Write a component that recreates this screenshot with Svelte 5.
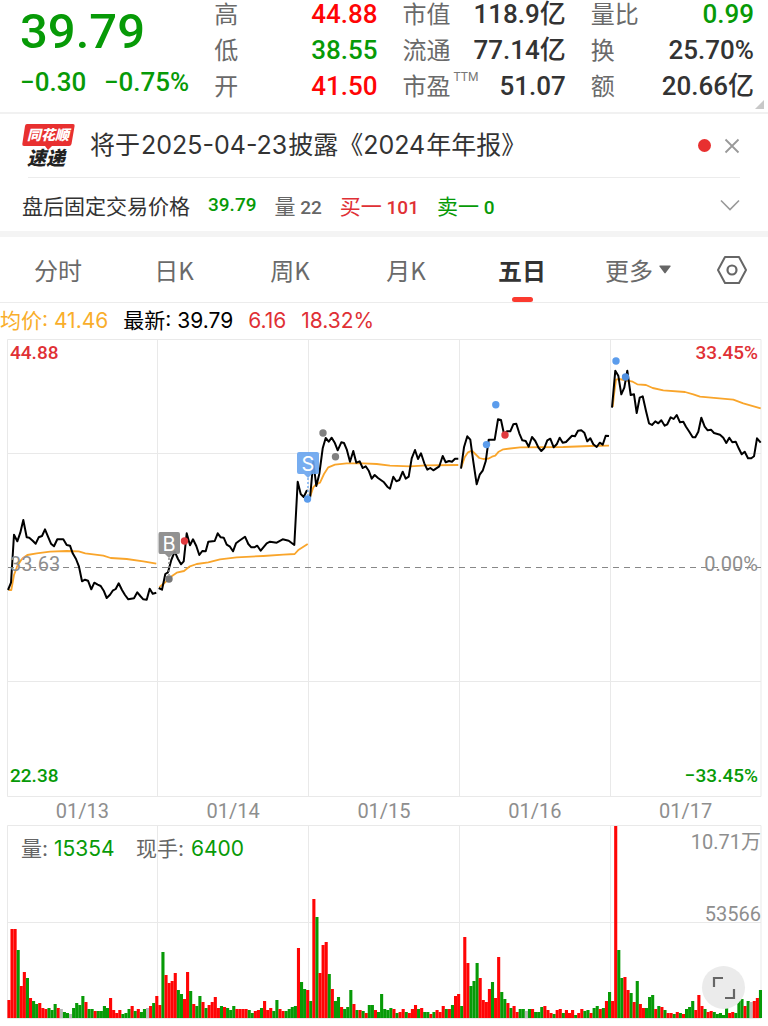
<script>
  const quotes = [
    [
      { label: '高', value: '44.88', tone: 'up' },
      { label: '低', value: '38.55', tone: 'down' },
      { label: '开', value: '41.50', tone: 'up' }
    ],
    [
      { label: '市值', value: '118.9亿', tone: '' },
      { label: '流通', value: '77.14亿', tone: '' },
      { label: '市盈', note: 'TTM', value: '51.07', tone: '' }
    ],
    [
      { label: '量比', value: '0.99', tone: 'down' },
      { label: '换', value: '25.70%', tone: '' },
      { label: '额', value: '20.66亿', tone: '' }
    ]
  ];

  const tabs = ['分时', '日K', '周K', '月K', '五日', '更多'];
  let active = $state('五日');

  const dates = ['01/13', '01/14', '01/15', '01/16', '01/17'];
  const dayLines = [157.5, 308.5, 459.5, 610.5];

  // One entry per session: plot origin, then price and average samples at three units per pixel.
  const sessions = [
    {
      x: 0, y: 330,
      price: '24,780 33,758 42,614 52,634 61,608 70,570 80,622 88,623 98,632 107,641 116,622 126,618 135,598 144,620 153,641 162,649 172,628 190,628 200,645 210,647 218,670 228,687 237,710 246,754 255,749 264,752 274,778 283,758 293,764 302,768 311,782 320,804 330,794 338,782 347,777 356,760 366,780 375,795 385,808 402,805 412,787 421,798 430,808 440,809 449,776 458,791 469,788',
      avg: '26,780 34,780 42,735 52,708 62,692 70,683 82,675 110,670 150,665 200,663 236,664 256,670 310,677 332,684 380,687 430,694 469,701'
    },
    {
      x: 150, y: 420,
      price: '26,504 36,509 46,462 54,457 64,420 74,395 84,417 93,433 101,424 110,340 120,376 129,358 139,378 148,405 157,393 167,394 175,365 194,363 203,340 212,352 221,353 230,374 240,380 249,394 258,370 268,362 285,350 295,372 304,382 313,382 322,377 332,392 350,370 360,365 380,368 398,358 416,362 433,375 443,185 452,222 461,231 470,212 474,212',
      avg: '28,502 50,483 66,468 80,458 102,453 118,440 140,432 175,427 210,418 260,412 340,408 400,404 434,402 446,389 473,372'
    },
    {
      x: 300, y: 400,
      price: '30,295 40,185 49,258 58,222 68,145 77,114 86,125 95,113 104,128 113,151 124,127 132,129 140,148 150,185 160,153 169,188 179,184 188,204 197,199 206,212 215,236 224,225 234,234 252,247 262,260 270,266 280,230 289,244 298,240 308,215 317,236 326,230 335,175 345,150 354,177 363,160 373,190 382,209 391,204 400,211 418,199 428,168 437,187 447,183 456,185 465,176 475,176',
      avg: '30,292 40,262 48,253 60,248 72,222 85,202 105,194 140,190 190,190 230,192 270,197 330,199 380,196 475,195'
    },
    {
      x: 450, y: 390,
      price: '33,236 42,172 52,139 61,149 70,215 80,283 89,254 98,242 107,214 116,149 134,149 144,88 153,90 162,132 171,124 181,124 190,103 199,101 208,130 217,151 227,153 236,170 246,141 256,153 265,172 274,183 283,174 292,151 301,146 311,172 320,163 329,143 338,158 348,156 366,137 375,139 384,122 394,121 403,128 412,154 421,145 430,163 440,171 449,158 458,164 467,137 477,138',
      avg: '34,232 44,202 54,187 66,182 76,192 88,204 100,207 115,206 126,200 136,197 146,185 160,178 210,172 340,171 420,168 477,167'
    },
    {
      x: 600, y: 335,
      price: '36,218 46,107 55,122 64,178 73,158 82,107 92,180 102,178 110,234 119,188 128,184 138,228 147,265 156,270 166,259 175,265 184,256 194,272 202,268 212,247 221,252 230,240 240,262 250,260 258,275 268,290 278,307 286,307 295,290 304,248 314,275 323,286 333,284 342,294 360,299 370,308 379,324 388,308 397,322 407,320 416,340 425,358 434,350 444,370 454,370 462,364 471,310 482,323',
      avg: '38,216 42,180 48,134 58,132 72,135 98,140 112,148 138,150 158,159 190,166 255,171 280,178 300,185 400,194 430,205 482,220'
    }
  ];

  function trace(session, key) {
    return session[key]
      .split(' ')
      .map((pair) => {
        const [px, py] = pair.split(',').map(Number);
        return `${(session.x + px / 3).toFixed(1)},${(session.y + py / 3).toFixed(1)}`;
      })
      .join(' ');
  }

  const dots = [
    { x: 169, y: 579, c: '#777' },
    { x: 184.5, y: 541, c: '#e03a3f' },
    { x: 307.5, y: 499, c: '#5b9cec' },
    { x: 323, y: 433, c: '#808080' },
    { x: 335.5, y: 456.7, c: '#808080' },
    { x: 495.8, y: 404.7, c: '#5b9cec' },
    { x: 486.5, y: 444.6, c: '#5b9cec' },
    { x: 505, y: 435, c: '#e03a3f' },
    { x: 616, y: 361, c: '#5b9cec' },
    { x: 625.5, y: 377, c: '#4f8fe0' }
  ];

  // Volume bars: direction (R up, G down, N flat) and height.
  const volume = (
    'R18 R89 R89 G68 R32 R46 G40 R20 G17 G14 R15 R10 R9 G10 G8 G14 R10 N9 G6 G5 N4 G10 G15 G13 G22 R16 G9 G9 R7 G7 G7 G12 G10 R20 R8 R5 R8 G4 G5 G9 R12 G7 R9 G6 G9 N10 R12 G15 R22 R13 ' +
    'G66 R43 R35 R37 R45 G28 G24 R19 R46 G27 R14 G12 G22 R16 G10 R13 R16 R21 R10 G12 R11 G10 G8 G12 R9 R9 R9 R9 G8 G5 R7 R8 G10 R17 R8 R10 G7 G18 R9 R7 G7 G9 G11 G12 R70 G36 G29 R28 G17 R119 ' +
    'G101 R45 R73 R76 G44 R29 G17 G21 R11 G9 G11 G28 R14 G8 R8 G7 R5 G13 G13 R8 G6 G24 G9 G8 G10 R9 G5 R6 R9 G6 R5 R9 R13 G9 R10 G6 G6 R4 G6 R8 R6 R12 G9 R9 G13 R22 R24 G12 R81 R55 ' +
    'G32 G37 G55 R40 R18 R16 R29 G36 R20 R61 G26 G19 R15 G10 R12 R6 G9 G9 N7 G9 R9 G6 G6 G11 R12 R8 R5 G4 R8 R9 G5 R8 R5 R8 G3 R5 R9 G7 G8 R5 G10 G12 R9 G10 R17 G26 R17 R192 G68 G40 ' +
    'R41 R28 G25 R16 G37 R14 R10 G10 G21 G23 R9 G12 R11 G8 R5 R5 G4 R6 G5 R4 G9 G11 G17 R8 R23 R12 G9 R6 R7 G6 G4 G5 G3 G10 R5 R6 G5 G17 G19 R12 G17 N16 R17 R20 G28'
  )
    .split(' ')
    .map((s, i) => ({
      x: 7.4 + i * 3.08,
      h: Number(s.slice(1)),
      c: { R: '#ff0505', G: '#079a07', N: '#b8b8b8' }[s[0]]
    }));
</script>

<main>
  <header>
    <div class="last">
      <strong>39.79</strong>
      <p><span>−0.30</span><span>−0.75%</span></p>
    </div>
    {#each quotes as group}
      <dl>
        {#each group as q}
          <div>
            <dt>{q.label}{#if q.note}<sup>{q.note}</sup>{/if}</dt>
            <dd class={q.tone}>{q.value}</dd>
          </div>
        {/each}
      </dl>
    {/each}
    <svg class="corner" viewBox="0 0 9 9" aria-hidden="true"><path d="M9 0V9H0Z" fill="#c8c8c8" /></svg>
  </header>

  <section class="notice">
    <svg class="brand" viewBox="0 0 54 46" role="img" aria-label="同花顺速递">
      <path d="M5 1H51Q53 1 52.600 3L49.500 21Q49 23 47 23H30L26 27L23 23H2Q0 23 .3 21L3 3Q3.300 1 5 1Z" fill="#e83030" />
      <text x="5" y="17" class="brand-top">同花顺</text>
      <text x="5" y="42" class="brand-sub">速递</text>
    </svg>
    <a href="#report">将于<span>2025-04-23</span>披露《2024<span>年年报》</span></a>
    <i class="unread"></i>
    <button class="icon" aria-label="关闭">
      <svg width="16" height="16" viewBox="0 0 16 16"><path d="M1.500 1.500L14.500 14.500M14.500 1.500L1.500 14.500" stroke="#999" stroke-width="1.800" fill="none" /></svg>
    </button>
  </section>

  <section class="after">
    <span class="name">盘后固定交易价格</span>
    <b class="down">39.79</b>
    <span class="muted">量 <b>22</b></span>
    <span class="bid">买一 <b>101</b></span>
    <span class="down ask">卖一 <b>0</b></span>
    <button class="icon" aria-label="展开">
      <svg width="20" height="12" viewBox="0 0 20 12"><path d="M1 1.500L10 10.500L19 1.500" stroke="#999" stroke-width="1.600" fill="none" /></svg>
    </button>
  </section>

  <nav>
    {#each tabs as tab}
      <button class:active={active === tab} onclick={() => (active = tab)}>
        {tab}{#if tab === '更多'}<svg width="12" height="9" viewBox="0 0 12 9"><path d="M1 .5H11Q12 .5 11.500 1.400L6.600 8Q6 8.800 5.400 8L.5 1.400Q0 .5 1 .5Z" fill="#666" /></svg>{/if}
      </button>
    {/each}
    <button aria-label="设置">
      <svg width="32" height="30" viewBox="0 0 32 30" fill="none" stroke="#666">
        <path d="M9 2H23L30 15L23 28H9L2 15Z" stroke-width="2" stroke-linejoin="round" />
        <circle cx="16" cy="15" r="4.500" stroke-width="2.200" />
      </svg>
    </button>
  </nav>

  <p class="legend">
    <span class="avg">均价: 41.46</span>
    <span class="now">最新: 39.79</span>
    <span class="bid">6.16</span>
    <span class="bid">18.32%</span>
  </p>

  <svg class="chart" viewBox="0 339 768 458" role="img" aria-label="五日价格走势">
    <g fill="none" stroke="#e9e9e9">
      <path d="M7.500 339.500H761V796.500H7.500ZM7.500 453.500H761M7.500 681.500H761" />
      {#each dayLines as x}<path d="M{x} 339.500V796.500" />{/each}
    </g>
    <path d="M8 567.500H761" stroke="#888" stroke-dasharray="6 5" />
    <g fill="none" stroke-linejoin="round">
      {#each sessions as s}
        <polyline points={trace(s, 'avg')} stroke="#f9a52b" stroke-width="1.800" />
        <polyline points={trace(s, 'price')} stroke="#000" stroke-width="2" />
      {/each}
    </g>
    {#each dots as d}<circle cx={d.x} cy={d.y} r="3.700" fill={d.c} />{/each}

    <path d="M169 558V575" stroke="#888" stroke-width="1.500" stroke-dasharray="2 2" />
    <path d="M160 532H178Q180 532 180 534V552Q180 554 178 554H173L169 558L165 554H160Q158.500 554 158.500 552V534Q158.500 532 160 532Z" fill="#8c8c8c" opacity=".95" />
    <text x="169" y="551" class="flag">B</text>
    <path d="M308 478V496" stroke="#7aaef0" stroke-width="1.500" stroke-dasharray="2 2" />
    <path d="M299 452H317Q319 452 319 454V472Q319 474 317 474H312L308 478L304 474H299Q297 474 297 472V454Q297 452 299 452Z" fill="#68a4ee" opacity=".9" />
    <text x="308" y="471" class="flag">S</text>

    <g class="axis">
      <text x="10" y="359" fill="#e03035">44.88</text>
      <text x="758" y="359" fill="#e03035" text-anchor="end">33.45%</text>
      <text x="10" y="571" class="mid">33.63</text>
      <text x="758" y="571" class="mid" text-anchor="end">0.00%</text>
      <text x="10" y="782" fill="#079a07">22.38</text>
      <text x="758" y="782" fill="#079a07" text-anchor="end">−33.45%</text>
    </g>
  </svg>

  <div class="dates">
    {#each dates as d}<time>{d}</time>{/each}
  </div>

  <div class="volume">
    <svg class="chart" viewBox="0 825 768 194" role="img" aria-label="成交量">
      <g fill="none" stroke="#e9e9e9">
        <path d="M7.500 825.500H761V1018.500H7.500ZM7.500 922.500H761" />
        {#each dayLines as x}<path d="M{x} 825.500V1018.500" />{/each}
      </g>
      {#each volume as b}<rect x={b.x} y={1018 - b.h} width="3.100" height={b.h} fill={b.c} />{/each}
      <g class="vol-text">
        <text x="21" y="856" fill="#666">量:</text>
        <text x="54" y="856" fill="#079a07">15354</text>
        <text x="136" y="856" fill="#666">现手:</text>
        <text x="191" y="856" fill="#079a07">6400</text>
      </g>
      <g class="axis">
        <text x="761" y="849" class="mid" text-anchor="end">10.71万</text>
        <text x="761" y="921" class="mid" text-anchor="end">53566</text>
      </g>
    </svg>
    <button class="full" aria-label="全屏">
      <svg width="24" height="24" viewBox="0 0 24 24"><path d="M2 11V2H11M22 13V22H13" fill="none" stroke="#666" stroke-width="2.200" /></svg>
    </button>
  </div>
</main>

<style>
  :global(body) {
    margin: 0;
    background: #fff;
  }
  main {
    --cjk: 'Noto Sans CJK SC', sans-serif;
    --din: Roboto, var(--cjk);
    --ui: Inter, var(--cjk);
    font-family: var(--ui);
    color: #333;
    white-space: nowrap;
  }
  button {
    border: 0;
    padding: 0;
    background: none;
    font: inherit;
    color: inherit;
    cursor: pointer;
  }
  p, dl, dd {
    margin: 0;
  }
  .up {
    color: #ff0505;
  }
  .down {
    color: #079a07;
  }
  .bid {
    color: #e03035;
  }
  .muted {
    color: #666;
  }

  header {
    position: relative;
    display: grid;
    grid-template-columns: 169fr 163fr 163fr 163fr;
    column-gap: 25px;
    padding: 0 14px 12px 20px;
    border-bottom: 2px solid #f1f1f1;
  }
  .last {
    font-family: var(--din);
    font-weight: 500;
    color: #079a07;
  }
  .last strong {
    display: block;
    font-size: 49px;
    font-weight: 500;
    line-height: 64px;
  }
  .last p {
    display: flex;
    justify-content: space-between;
    font-size: 26px;
    line-height: 36px;
  }
  dl {
    display: grid;
    gap: 8px;
  }
  dl div {
    display: flex;
    justify-content: space-between;
    line-height: 28px;
    height: 28px;
  }
  dt {
    font: 400 24px/30px var(--din);
    color: #6a6a6a;
  }
  dd {
    font-family: var(--din);
    font-size: 26px;
    font-weight: 500;
  }
  sup {
    font-size: 12px;
    line-height: 0;
    vertical-align: 14px;
    margin-left: 3px;
    color: #777;
  }
  .corner {
    position: absolute;
    right: 4px;
    bottom: 3px;
    width: 9px;
    height: 9px;
  }

  .notice {
    display: flex;
    align-items: center;
    height: 63px;
    margin: 0 28px;
    border-bottom: 1px solid #ececec;
  }
  .brand {
    width: 54px;
    height: 46px;
    margin: 0 14px 0 -6px;
  }
  .brand-top {
    font: italic 900 14px var(--cjk);
    fill: #fff;
  }
  .brand-sub {
    font: italic 900 19px var(--cjk);
    fill: #222;
  }
  .notice a {
    flex: 1;
    font-size: 25px;
    line-height: 32px;
    padding-bottom: 2px;
    color: #333;
    text-decoration: none;
  }
  .notice a span {
    margin: 0 1px;
  }
  .unread {
    width: 13px;
    height: 13px;
    margin-right: 13px;
    border-radius: 50%;
    background: #e83030;
  }
  .icon {
    display: flex;
  }

  .after {
    display: flex;
    align-items: center;
    gap: 18px;
    height: 53px;
    padding: 0 28px 0 22px;
    font: 21px var(--cjk);
    border-bottom: 6px solid #f4f4f4;
  }
  .after b {
    font-family: var(--din);
    font-size: 19px;
    font-weight: 500;
  }
  .ask {
    flex: 1;
  }

  nav {
    display: grid;
    grid-template-columns: repeat(6, 116fr) 72fr;
    height: 65px;
    border-bottom: 1px solid #ececec;
  }
  nav button {
    position: relative;
    display: flex;
    align-items: center;
    justify-content: center;
    gap: 6px;
    font: 400 24px var(--cjk);
    color: #6a6a6a;
  }
  nav .active {
    font-weight: 700;
    color: #333;
  }
  nav .active::after {
    content: '';
    position: absolute;
    bottom: 0;
    width: 21px;
    height: 5px;
    border-radius: 3px;
    background: #fb3a2f;
  }

  .legend {
    display: flex;
    align-items: center;
    gap: 15px;
    height: 36px;
    font-size: 21px;
    line-height: 28px;
  }
  .avg {
    color: #f9ae2b;
  }
  .now {
    color: #000;
  }

  .chart {
    display: block;
    width: 100%;
  }
  .axis {
    font: 500 19px var(--din);
  }
  .axis .mid {
    font-size: 20px;
    font-weight: 400;
    fill: #8e8e8e;
  }
  .flag {
    font: 20px var(--ui);
    fill: #fff;
    text-anchor: middle;
  }
  .vol-text {
    font: 21px var(--ui);
  }

  .dates {
    display: grid;
    grid-template-columns: repeat(5, 1fr);
    padding: 0 7px;
    font: 20px/28px var(--din);
    text-align: center;
    color: #8e8e8e;
  }

  .volume {
    position: relative;
  }
  .full {
    position: absolute;
    right: 23px;
    bottom: 10px;
    display: grid;
    place-items: center;
    width: 43px;
    height: 43px;
    border-radius: 50%;
    background: #ebebeb;
  }
</style>
